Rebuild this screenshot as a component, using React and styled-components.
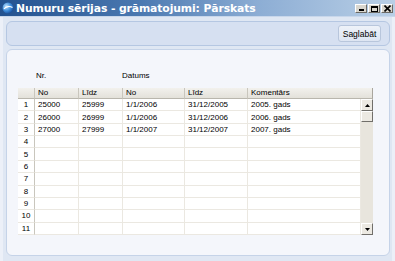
import React from 'react';
import styled, { createGlobalStyle } from 'styled-components';

const GlobalStyle = createGlobalStyle`
  html, body { margin: 0; padding: 0; background: #dfe7f3; }
  body { font-family: "Liberation Sans", Arial, sans-serif; font-size: 8px; color: #000; }
`;

const rows = [
  { no: '25000', lidz: '25999', dNo: '1/1/2006', dLidz: '31/12/2005', kom: '2005. gads' },
  { no: '26000', lidz: '26999', dNo: '1/1/2006', dLidz: '31/12/2006', kom: '2006. gads' },
  { no: '27000', lidz: '27999', dNo: '1/1/2007', dLidz: '31/12/2007', kom: '2007. gads' },
];

const cols = '17px 44px 44px 62px 63px 113px';

export default function App() {
  const all = Array.from({ length: 11 }, (_, i) => rows[i] || {});
  return (
    <>
      <GlobalStyle />
      <Window>
        <TitleBar>
          <AppIcon viewBox="0 0 12 12">
            <defs>
              <radialGradient id="g" cx="35%" cy="35%" r="70%">
                <stop offset="0" stopColor="#bfe3ff" />
                <stop offset="0.6" stopColor="#3b8ad8" />
                <stop offset="1" stopColor="#1a4f9a" />
              </radialGradient>
            </defs>
            <circle cx="6" cy="6" r="5.5" fill="url(#g)" />
            <path d="M2 7 C4 4, 8 4, 10.5 5.5" stroke="#fff" strokeWidth="1.2" fill="none" />
          </AppIcon>
          <Title>Numuru sērijas - grāmatojumi: Pārskats</Title>
          <Controls>
            <CtrlBtn><Minimize /></CtrlBtn>
            <CtrlBtn><Maximize /></CtrlBtn>
            <CtrlBtn>
              <svg width="7" height="7" viewBox="0 0 7 7">
                <path d="M0.5 0.5 L6.5 6.5 M6.5 0.5 L0.5 6.5" stroke="#000" strokeWidth="1.6" />
              </svg>
            </CtrlBtn>
          </Controls>
        </TitleBar>
        <Body>
          <Toolbar>
            <SaveButton>Saglabāt</SaveButton>
          </Toolbar>
          <Panel>
            <GroupLabels>
              <GroupLabel $w={86}>Nr.</GroupLabel>
              <GroupLabel>Datums</GroupLabel>
            </GroupLabels>
            <Table>
              <HeaderRow>
                <HeadCell />
                <HeadCell>No</HeadCell>
                <HeadCell>Līdz</HeadCell>
                <HeadCell>No</HeadCell>
                <HeadCell>Līdz</HeadCell>
                <HeadCell>Komentārs</HeadCell>
              </HeaderRow>
              <TableBody>
                <Rows>
                  {all.map((r, i) => (
                    <Row key={i}>
                      <NumCell>{i + 1}</NumCell>
                      <Cell>{r.no}</Cell>
                      <Cell>{r.lidz}</Cell>
                      <Cell>{r.dNo}</Cell>
                      <Cell>{r.dLidz}</Cell>
                      <Cell>{r.kom}</Cell>
                    </Row>
                  ))}
                </Rows>
                <ScrollBar>
                  <ScrollBtn>
                    <svg width="5" height="3" viewBox="0 0 5 3"><path d="M2.5 0 L5 3 L0 3Z" fill="#000" /></svg>
                  </ScrollBtn>
                  <Thumb />
                  <Track />
                  <ScrollBtn>
                    <svg width="5" height="3" viewBox="0 0 5 3"><path d="M0 0 L5 0 L2.5 3Z" fill="#000" /></svg>
                  </ScrollBtn>
                </ScrollBar>
              </TableBody>
            </Table>
          </Panel>
        </Body>
      </Window>
    </>
  );
}

const Window = styled.div`
  width: 395px;
  height: 261px;
  display: flex;
  flex-direction: column;
  background: #dfe7f3;
  overflow: hidden;
`;

const TitleBar = styled.div`
  height: 17px;
  flex: none;
  display: flex;
  align-items: center;
  padding: 0 2px 0 2px;
  background: linear-gradient(to right, #23528f 0%, #4a78b0 35%, #8cadd4 65%, #b9cfe6 100%);
  border-bottom: 1px solid #c8d7eb;
  box-sizing: border-box;
`;

const AppIcon = styled.svg`
  width: 12px;
  height: 12px;
  flex: none;
`;

const Title = styled.div`
  margin-left: 2px;
  flex: 1;
  color: #fff;
  font-family: "DejaVu Sans", sans-serif;
  font-weight: bold;
  font-size: 10.8px;
  letter-spacing: -0.1px;
  white-space: nowrap;
`;

const Controls = styled.div`
  display: flex;
  gap: 1px;
  margin-top: 1px;
`;

const CtrlBtn = styled.div`
  width: 12px;
  height: 9px;
  box-sizing: border-box;
  background: #d9d6ce;
  border: 1px solid;
  border-color: #fff #6b6a66 #6b6a66 #fff;
  display: flex;
  align-items: center;
  justify-content: center;
`;

const Minimize = styled.div`
  width: 5px;
  height: 2px;
  background: #000;
  align-self: flex-end;
  margin-bottom: 1px;
`;

const Maximize = styled.div`
  width: 7px;
  height: 6px;
  box-sizing: border-box;
  border: 1px solid #000;
  border-top-width: 2px;
`;

const Body = styled.div`
  flex: 1;
  display: flex;
  flex-direction: column;
  gap: 3px;
  padding: 4px 2px 5px 3px;
  border-left: 3px solid #ecf0f8;
  border-right: 3px solid #ecf0f8;
  box-sizing: border-box;
  min-height: 0;
`;

const Toolbar = styled.div`
  height: 25px;
  flex: none;
  box-sizing: border-box;
  display: flex;
  align-items: center;
  justify-content: flex-end;
  padding-right: 8px;
  background: #d6e0f1;
  border: 1px solid #b5c7e2;
  border-radius: 6px;
`;

const SaveButton = styled.div`
  width: 43px;
  height: 17px;
  box-sizing: border-box;
  display: flex;
  align-items: center;
  justify-content: center;
  font-size: 8.5px;
  background: linear-gradient(#eef2f9, #dde5f2);
  border: 1px solid #b8c6dc;
  border-radius: 3px;
`;

const Panel = styled.div`
  flex: 1;
  display: flex;
  flex-direction: column;
  box-sizing: border-box;
  background: #f4f6fb;
  border: 1px solid #c5d3e8;
  border-radius: 6px;
  padding: 21px 0 0 11px;
`;

const GroupLabels = styled.div`
  display: flex;
  height: 11px;
  padding-left: 18px;
  margin-bottom: 6px;
`;

const GroupLabel = styled.div`
  width: ${(p) => (p.$w ? `${p.$w}px` : 'auto')};
`;

const Table = styled.div`
  width: 355px;
  display: flex;
  flex-direction: column;
`;

const HeaderRow = styled.div`
  display: grid;
  grid-template-columns: ${cols} 12px;
  height: 11px;
`;

const HeadCell = styled.div`
  box-sizing: border-box;
  background: linear-gradient(#f2f1ed, #e3e1da);
  border-right: 1px solid #c9c6bd;
  border-bottom: 1px solid #b9b6ad;
  padding-left: 3px;
  line-height: 10px;
  &:last-child { grid-column: span 2; border-right: 1px solid #a9a69e; }
`;

const TableBody = styled.div`
  display: flex;
  height: 136px;
`;

const Rows = styled.div`
  display: flex;
  flex-direction: column;
  background: #fff;
`;

const Row = styled.div`
  display: grid;
  grid-template-columns: ${cols};
  flex: 1;
`;

const Cell = styled.div`
  box-sizing: border-box;
  border-right: 1px solid #ebe8e1;
  border-bottom: 1px solid #ebe8e1;
  padding-left: 3px;
  display: flex;
  align-items: center;
`;

const NumCell = styled(Cell)`
  justify-content: center;
  padding-left: 0;
  border-right-color: #c9c6bd;
`;

const ScrollBar = styled.div`
  width: 12px;
  display: flex;
  flex-direction: column;
  background: #e8e5dd;
`;

const ScrollBtn = styled.div`
  height: 12px;
  box-sizing: border-box;
  background: #ece9e2;
  border: 1px solid;
  border-color: #fff #716f6a #716f6a #fff;
  display: flex;
  align-items: center;
  justify-content: center;
`;

const Thumb = styled(ScrollBtn)`
  height: 11px;
`;

const Track = styled.div`
  flex: 1;
`;
